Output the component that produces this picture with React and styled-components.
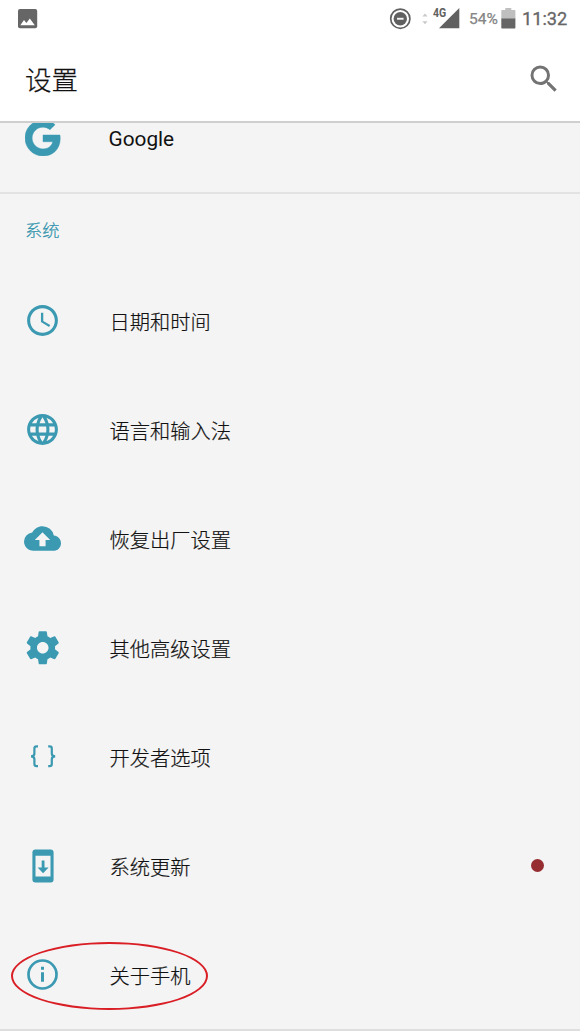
import styled, { createGlobalStyle } from "styled-components";
import { MdAccessTime, MdCloudUpload, MdLanguage, MdSearch } from "react-icons/md";

const GoogleIcon = () => (
    <svg width="36" height="36" viewBox="0 0 48 48" fill="currentColor" stroke="currentColor" strokeWidth="0.6">
        <path d="M24 9.5c3.54 0 6.71 1.22 9.21 3.6l6.85-6.85C35.9 2.38 30.47 0 24 0 10.75 0 0 10.75 0 24s10.75 24 24 24c6.48 0 11.93-2.13 15.89-5.81 4.51-4.18 7.09-10.36 7.09-17.64 0-1.57-.15-3.09-.38-4.55H24v9.02h12.94c-.58 2.96-2.26 5.48-4.78 7.18-2.15 1.45-4.92 2.3-8.16 2.3-8.01 0-14.5-6.49-14.5-14.5S15.99 9.5 24 9.5z" />
    </svg>
);

const GearIcon = () => (
    <svg width="39.5" height="39.5" viewBox="0 0 24 24" fill="currentColor">
        <path d="M19.43 12.98c.04-.32.07-.64.07-.98s-.03-.66-.07-.98l2.11-1.65c.19-.15.24-.42.12-.64l-2-3.46c-.12-.22-.39-.3-.61-.22l-2.49 1c-.52-.4-1.08-.73-1.69-.98l-.38-2.65C14.46 2.18 14.25 2 14 2h-4c-.25 0-.46.18-.49.42l-.38 2.65c-.61.25-1.17.59-1.69.98l-2.49-1c-.23-.09-.49 0-.61.22l-2 3.46c-.13.22-.07.49.12.64l2.11 1.65c-.04.32-.07.65-.07.98s.03.66.07.98l-2.11 1.65c-.19.15-.24.42-.12.64l2 3.46c.12.22.39.3.61.22l2.49-1c.52.4 1.08.73 1.69.98l.38 2.65c.03.24.24.42.49.42h4c.25 0 .46-.18.49-.42l.38-2.65c.61-.25 1.17-.59 1.69-.98l2.49 1c.23.09.49 0 .61-.22l2-3.46c.12-.22.07-.49-.12-.64l-2.11-1.65zM12 15.5c-1.93 0-3.5-1.57-3.5-3.5s1.57-3.5 3.5-3.5 3.5 1.57 3.5 3.5-1.57 3.5-3.5 3.5z" />
    </svg>
);

const BracesIcon = () => (
    <svg width="26" height="23" viewBox="0 0 26 23" fill="none" stroke="currentColor" strokeWidth="2.2">
        <path d="M8 1.4H6.6Q4.4 1.4 4.4 3.6V8.4Q4.4 11.3 1 11.3Q4.4 11.3 4.4 14.2V19Q4.4 21.2 6.6 21.2H8" />
        <path d="M18.2 1.4H19.6Q21.8 1.4 21.8 3.6V8.4Q21.8 11.3 25.2 11.3Q21.8 11.3 21.8 14.2V19Q21.8 21.2 19.6 21.2H18.2" />
    </svg>
);

const UpdateIcon = () => (
    <svg width="22" height="34" viewBox="0 0 22 34" fill="currentColor">
        <path fillRule="evenodd" d="M3.4.5h15.2a3 3 0 0 1 3 3v27a3 3 0 0 1-3 3H3.4a3 3 0 0 1-3-3v-27a3 3 0 0 1 3-3zM3.5 6.8v20.6h15V6.8z" />
        <path d="M9.7 11.4h2.8v7.2h4.1L11.1 24.3 5.6 18.6h4.1z" />
    </svg>
);

const InfoIcon = () => (
    <svg width="31" height="31" viewBox="0 0 31 31" fill="currentColor">
        <circle cx="15.5" cy="15.5" r="14" fill="none" stroke="currentColor" strokeWidth="2.7" />
        <path d="M14 7.7h3v3h-3zM14 13.2h3v9.6h-3z" />
    </svg>
);

const PictureIcon = () => (
    <svg width="20" height="20" viewBox="0 0 20 20">
        <rect x="0" y="0" width="19.2" height="19.2" rx="2" fill="#666" />
        <path d="M2.3 16.2L6 11.1l2.4 2.9 3.4-4.5 5 6.7z" fill="#fff" />
    </svg>
);

const DoNotDisturbIcon = () => (
    <svg width="22" height="22" viewBox="0 0 22 22">
        <circle cx="11.3" cy="10.7" r="9.6" fill="none" stroke="#606060" strokeWidth="1.7" />
        <circle cx="11.3" cy="10.7" r="6.7" fill="#606060" />
        <path d="M8 9.8h6.6v1.9H8z" fill="#f4f4f4" />
    </svg>
);

const DataArrows = () => (
    <svg width="6" height="12" viewBox="0 0 6 12" fill="#c9c9c9">
        <path d="M0.4 3.6L3 0.6l2.6 3zM0.4 8.2L3 11.2l2.6-3z" />
    </svg>
);

const SignalIcon = () => (
    <svg width="21" height="21" viewBox="0 0 21 21" fill="#606060">
        <path d="M20.3 0V20.3H0z" />
    </svg>
);

const BatteryIcon = () => (
    <svg width="15" height="21" viewBox="0 0 15 21">
        <path d="M4.3 0h6v2h3.3q.8 0 .8.8V11H.3V2.8q0-.8.8-.8h3.2z" fill="#bfbfbf" />
        <path d="M.3 10.5h14.1v9.2q0 .8-.8.8H1.1q-.8 0-.8-.8z" fill="#666" />
    </svg>
);

const items = [
    { label: "日期和时间", icon: <MdAccessTime size={37} /> },
    { label: "语言和输入法", icon: <MdLanguage size={37} /> },
    { label: "恢复出厂设置", icon: <MdCloudUpload size={37} /> },
    { label: "其他高级设置", icon: <GearIcon /> },
    { label: "开发者选项", icon: <BracesIcon /> },
    { label: "系统更新", icon: <UpdateIcon />, dot: true },
    { label: "关于手机", icon: <InfoIcon />, circled: true },
];

const App = () => {
    return (
        <Screen>
            <GlobalStyle />
            <StatusBar>
                <PictureIcon />
                <StatusRight>
                    <DoNotDisturbIcon />
                    <Signal>
                        <DataArrows />
                        <SignalIcon />
                        <NetworkType>4G</NetworkType>
                    </Signal>
                    <Percent>54%</Percent>
                    <BatteryIcon />
                    <Clock>11:32</Clock>
                </StatusRight>
            </StatusBar>
            <Header>
                <Title>设置</Title>
                <MdSearch size={36} />
            </Header>
            <List>
                <Row $scrolled>
                    <IconSlot><GoogleIcon /></IconSlot>
                    <LatinLabel>Google</LatinLabel>
                </Row>
                <SectionTitle>系统</SectionTitle>
                {items.map((item) => (
                    <Row key={item.label}>
                        <IconSlot>{item.icon}</IconSlot>
                        <Label>{item.label}</Label>
                        {item.dot && <Dot />}
                        {item.circled && <Marker />}
                    </Row>
                ))}
                <Divider />
            </List>
        </Screen>
    );
};

const GlobalStyle = createGlobalStyle`
    body{
        margin: 0;
        background-color: #f4f4f4;
        font-family: Roboto, "Noto Sans CJK SC", sans-serif;
    }
    *{
        box-sizing: border-box;
    }
    svg{
        display: block;
        flex-shrink: 0;
    }
`

const Screen = styled.div`
    display: flex;
    flex-direction: column;
    height: 1031px;
    overflow: hidden;
`

const StatusBar = styled.div`
    display: flex;
    align-items: center;
    justify-content: space-between;
    height: 37px;
    padding: 0 12px 0 18px;
    background-color: #fff;
`

const StatusRight = styled.div`
    display: flex;
    align-items: center;
`

const Signal = styled.div`
    position: relative;
    display: flex;
    align-items: center;
    gap: 11px;
    margin: 0 9px 0 11px;
`

const NetworkType = styled.span`
    position: absolute;
    left: 11px;
    top: -1px;
    color: #606060;
    font-size: 12.5px;
    font-weight: 700;
    line-height: 12px;
    transform: scaleX(0.84);
    transform-origin: left;
`

const Percent = styled.span`
    width: 32px;
    color: #858585;
    font-size: 15.5px;
    font-weight: 400;
    -webkit-text-stroke: 0.25px;
`

const Clock = styled.span`
    width: 46px;
    margin-left: 6px;
    color: #666;
    font-size: 18.2px;
    font-weight: 400;
    -webkit-text-stroke: 0.3px;
    white-space: nowrap;
`

const Header = styled.header`
    display: flex;
    align-items: center;
    justify-content: space-between;
    height: 86px;
    padding: 0 18px 1px 25px;
    border-bottom: 2px solid #cfcfcf;
    background-color: #fff;
    color: #737373;
`

const Title = styled.h1`
    margin: 4px 0 0;
    color: #111;
    font-size: 26.5px;
    font-weight: 300;
    line-height: 36px;
    -webkit-text-stroke: 0.25px;
`

const List = styled.main`
    flex: 1;
    overflow: hidden;
`

const Row = styled.div`
    position: relative;
    display: flex;
    align-items: center;
    height: ${({ $scrolled }) => $scrolled ? "110px" : "109px"};
    margin-top: ${({ $scrolled }) => $scrolled ? "-39px" : "0"};
    border-bottom: ${({ $scrolled }) => $scrolled ? "2px solid #e3e3e3" : "none"};
    padding-right: 36px;
`

const IconSlot = styled.div`
    display: grid;
    place-items: center;
    width: 85px;
    margin-right: 24.5px;
    color: #3b9ab2;
`

const Label = styled.span`
    padding-top: 4px;
    color: #111;
    font-size: 20.25px;
    font-weight: 300;
    line-height: 28px;
    -webkit-text-stroke: 0.2px;
`

const LatinLabel = styled(Label)`
    margin-left: -1px;
    padding-top: 1px;
    font-size: 20.8px;
    font-weight: 400;
    -webkit-text-stroke: 0;
`

const SectionTitle = styled.h2`
    display: flex;
    align-items: center;
    height: 72px;
    margin: 0;
    padding: 0 0 1px 25px;
    color: #2f93ac;
    font-size: 17.3px;
    font-weight: 300;
    -webkit-text-stroke: 0.2px;
`

const Dot = styled.span`
    width: 13px;
    height: 13px;
    margin-left: auto;
    border-radius: 50%;
    background-color: #962d31;
`

const Marker = styled.span`
    position: absolute;
    left: 11px;
    top: 22px;
    width: 197px;
    height: 68px;
    border: 2.5px solid #d91e25;
    border-radius: 50%;
`

const Divider = styled.div`
    height: 2px;
    background-color: #dedede;
`

export default App;
